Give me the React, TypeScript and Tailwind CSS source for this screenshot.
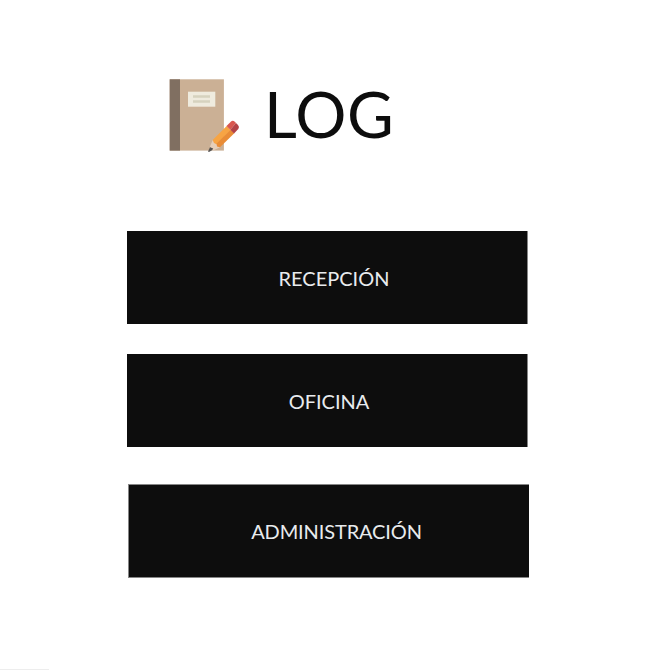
function Notebook() {
  return (
    <svg width="72" height="76" viewBox="168 78 72 76" className="shrink-0">
      <rect x="169.700" y="79.300" width="54.200" height="71.300" fill="#cbb095" />
      <rect x="169.700" y="79.300" width="10.300" height="71.300" fill="#806f61" />
      <rect x="188" y="91.700" width="27.300" height="15" fill="#efebde" />
      <path d="M193 96.500h17M193 101.500h17" stroke="#d6d2be" strokeWidth="2.300" />
      <path d="M210 146.500L212.700 140L220 147.300L213 150.500z" fill="#e6cfb9" />
      <path d="M208 151.500L210 147.200L213.200 148.500L212 150.300L209 152z" fill="#575554" />
      <path d="M212.700 140L226.700 126L230.700 130L216.500 144.200L214 143z" fill="#f7a443" />
      <path d="M216.500 143.800L230.500 129.800L234.300 133.300L220 147.300L217 146.500z" fill="#e98c36" />
      <path d="M226.500 126L230.800 121.700Q232.800 120 234.800 121.800L236 123L230.300 129.800z" fill="#d95750" />
      <path d="M230.300 129.800L236 123L238 125Q239.800 127 238.300 129L234 133.500z" fill="#b34347" />
    </svg>
  );
}

export default function App() {
  return (
    <main className="h-[670px] w-[665px] overflow-hidden bg-white font-['Lato',sans-serif] flex flex-col">
      <header className="flex items-start pl-[168px] pt-[78px] h-[231px] shrink-0">
        <Notebook />
        <h1 className="ml-[24px] -mt-[2px] text-[64px] leading-[76px] tracking-[0.5px] text-[#0d0d0d]">LOG</h1>
      </header>
      <nav className="flex flex-col text-[20px] text-[#e8ebee]">
        <button className="ml-[127px] h-[93px] w-[401px] border-r border-[#868686] bg-[#0d0d0d] pl-[14px]">RECEPCIÓN</button>
        <button className="ml-[127px] mt-[30px] h-[93px] w-[401px] border-r border-[#868686] bg-[#0d0d0d] pl-[4px]">OFICINA</button>
        <button className="ml-[128px] mt-[37px] h-[94px] w-[401px] border-y border-l border-[#868686] bg-[#0d0d0d] pl-[15px] tracking-[-0.12px]">ADMINISTRACIÓN</button>
      </nav>
      <div className="mt-auto h-px w-[49px] bg-[#ededed]" />
    </main>
  );
}
